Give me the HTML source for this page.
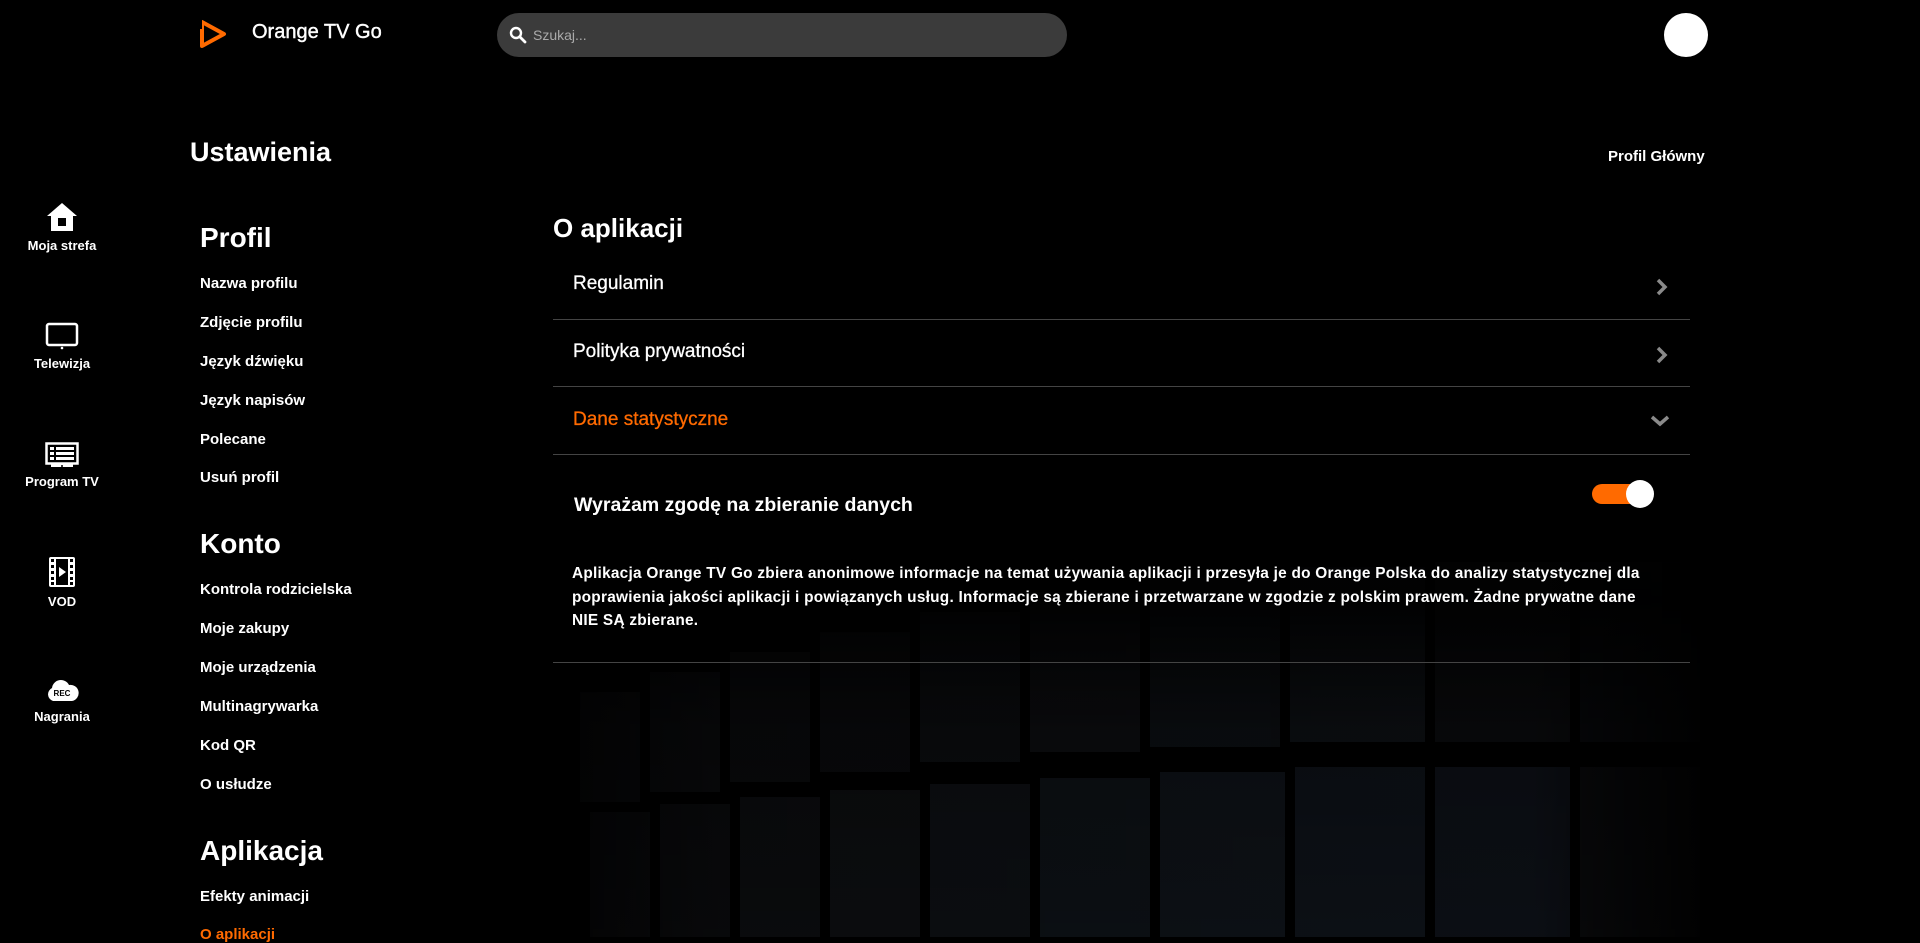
<!DOCTYPE html>
<html><head><meta charset="utf-8"><style>
*{margin:0;padding:0;box-sizing:border-box}
body{width:1920px;height:937px;background:#000;color:#fff;font-family:"Liberation Sans",Arial,sans-serif;font-weight:bold;overflow:hidden;position:relative}
.a{position:absolute;white-space:nowrap}
.nav{position:absolute;left:0;width:124px;text-align:center;font-size:13px}
.nav svg{display:block;margin:0 auto 6px}
.mi{position:absolute;left:200px;font-size:15px}
.mh{position:absolute;left:200px;font-size:28px}
.row{position:absolute;left:553px;width:1137px;border-bottom:1px solid #444}
</style></head><body>
<svg class="a" style="left:470px;top:192px" width="1250" height="745">
<defs><linearGradient id="f" x1="0" y1="0" x2="1" y2="0"><stop offset="0" stop-color="#000" stop-opacity="1"/><stop offset=".2" stop-color="#000" stop-opacity=".3"/><stop offset=".85" stop-color="#000" stop-opacity=".2"/><stop offset="1" stop-color="#000" stop-opacity="1"/></linearGradient>
<linearGradient id="g" x1="0" y1="0" x2="0" y2="1"><stop offset="0" stop-color="#000" stop-opacity=".4"/><stop offset=".55" stop-color="#000" stop-opacity=".9"/><stop offset=".72" stop-color="#000" stop-opacity=".3"/><stop offset="1" stop-color="#000" stop-opacity=".1"/></linearGradient></defs>
<g fill="#101114" opacity=".85" transform="translate(-60,0)">
<rect x="170" y="500" width="60" height="110"/><rect x="240" y="480" width="70" height="120"/><rect x="320" y="460" width="80" height="130"/><rect x="410" y="440" width="90" height="140"/><rect x="510" y="420" width="100" height="150" fill="#121419"/><rect x="620" y="400" width="110" height="160" fill="#14161b"/><rect x="740" y="385" width="130" height="170" fill="#13171d"/><rect x="880" y="375" width="135" height="175" fill="#15191f"/><rect x="1025" y="370" width="135" height="180"/><rect x="1170" y="370" width="120" height="180" fill="#0e1014"/>
<rect x="180" y="620" width="60" height="125"/><rect x="250" y="612" width="70" height="133"/><rect x="330" y="605" width="80" height="140" fill="#121418"/><rect x="420" y="598" width="90" height="147" fill="#14171b"/><rect x="520" y="592" width="100" height="153" fill="#15181e"/><rect x="630" y="586" width="110" height="159" fill="#141a22"/><rect x="750" y="580" width="125" height="165" fill="#161c24"/><rect x="885" y="575" width="130" height="170" fill="#151b24"/><rect x="1025" y="575" width="135" height="170" fill="#131821"/><rect x="1170" y="575" width="120" height="170"/>
</g>
<rect width="1250" height="745" fill="url(#g)"/>
<rect width="1250" height="745" fill="url(#f)"/>
</svg>

<svg class="a" style="left:198px;top:19px" width="30" height="32" viewBox="0 0 30 32"><path d="M4 3 V27 L26 15 Z" fill="none" stroke="#ff6a00" stroke-width="4" stroke-linejoin="round"/><rect x="0" y="0" width="4" height="10" fill="#000"/></svg>
<div class="a" style="left:252px;top:21px;font-size:20px;font-weight:normal;-webkit-text-stroke:.4px #fff">Orange TV Go</div>
<div class="a" style="left:497px;top:13px;width:570px;height:44px;border-radius:22px;background:#3b3b3b"></div>
<svg class="a" style="left:509px;top:26px" width="18" height="18" viewBox="0 0 18 18"><circle cx="7" cy="7" r="5" fill="none" stroke="#fff" stroke-width="2.4"/><path d="M11 11 L16 16" stroke="#fff" stroke-width="2.8" stroke-linecap="round"/></svg>
<div class="a" style="left:533px;top:27px;font-size:14px;color:#aaa;font-weight:normal">Szukaj...</div>
<div class="a" style="left:1664px;top:13px;width:44px;height:44px;border-radius:50%;background:#fff"></div>

<div class="a" style="left:190px;top:137px;font-size:27px">Ustawienia</div>
<div class="a" style="left:1608px;top:148px;font-size:15px">Profil Główny</div>

<div class="nav" style="top:202px"><svg width="32" height="30" viewBox="0 0 32 30"><path d="M16 1 L31 14 H27 V29 H5 V14 H1 Z" fill="#fff"/><rect x="12" y="16" width="8" height="8" fill="#000"/></svg>Moja strefa</div>
<div class="nav" style="top:322px"><svg width="34" height="28" viewBox="0 0 34 28"><rect x="2" y="2" width="30" height="21" rx="2" fill="none" stroke="#fff" stroke-width="2.5"/><circle cx="17" cy="26" r="1.3" fill="#fff"/></svg>Telewizja</div>
<div class="nav" style="top:442px"><svg width="34" height="26" viewBox="0 0 34 26"><rect x="1.5" y="1.5" width="31" height="20" fill="none" stroke="#fff" stroke-width="2.5"/><rect x="5" y="5" width="4" height="3" fill="#fff"/><rect x="5" y="10" width="4" height="3" fill="#fff"/><rect x="5" y="15" width="4" height="3" fill="#fff"/><rect x="11" y="5" width="18" height="3" fill="#fff"/><rect x="11" y="10" width="18" height="3" fill="#fff"/><rect x="11" y="15" width="18" height="3" fill="#fff"/><rect x="6" y="22" width="22" height="3" fill="#fff"/><circle cx="17" cy="24" r="1" fill="#000"/></svg>Program TV</div>
<div class="nav" style="top:556px"><svg width="28" height="32" viewBox="0 0 28 32"><rect x="1" y="1" width="26" height="30" rx="2" fill="#fff"/><g fill="#000"><rect x="3" y="3" width="3" height="3"/><rect x="3" y="9" width="3" height="3"/><rect x="3" y="15" width="3" height="3"/><rect x="3" y="21" width="3" height="3"/><rect x="3" y="26" width="3" height="3"/><rect x="22" y="3" width="3" height="3"/><rect x="22" y="9" width="3" height="3"/><rect x="22" y="15" width="3" height="3"/><rect x="22" y="21" width="3" height="3"/><rect x="22" y="26" width="3" height="3"/><rect x="8" y="3" width="12" height="26"/></g><path d="M11 11 L18 16 L11 21Z" fill="#fff"/></svg>VOD</div>
<div class="nav" style="top:677px"><svg width="34" height="26" viewBox="0 0 34 26"><path d="M8 24 A7 7 0 0 1 7 11 A9 9 0 0 1 24 8 A8 8 0 0 1 27 24 Z" fill="#fff"/><text x="17" y="19" font-size="8" font-family="Liberation Sans" text-anchor="middle" fill="#000">REC</text></svg>Nagrania</div>

<div class="mh" style="top:222px">Profil</div>
<div class="mi" style="top:275px">Nazwa profilu</div>
<div class="mi" style="top:314px">Zdjęcie profilu</div>
<div class="mi" style="top:353px">Język dźwięku</div>
<div class="mi" style="top:392px">Język napisów</div>
<div class="mi" style="top:431px">Polecane</div>
<div class="mi" style="top:469px">Usuń profil</div>
<div class="mh" style="top:528px">Konto</div>
<div class="mi" style="top:581px">Kontrola rodzicielska</div>
<div class="mi" style="top:620px">Moje zakupy</div>
<div class="mi" style="top:659px">Moje urządzenia</div>
<div class="mi" style="top:698px">Multinagrywarka</div>
<div class="mi" style="top:737px">Kod QR</div>
<div class="mi" style="top:776px">O usłudze</div>
<div class="mh" style="top:835px">Aplikacja</div>
<div class="mi" style="top:888px">Efekty animacji</div>
<div class="mi" style="top:926px;color:#ff6a00">O aplikacji</div>

<div class="a" style="left:553px;top:213px;font-size:26px">O aplikacji</div>
<div class="row" style="top:252px;height:68px"></div>
<div class="row" style="top:320px;height:67px"></div>
<div class="row" style="top:387px;height:68px"></div>
<div class="row" style="top:455px;height:208px"></div>
<div class="a" style="left:573px;top:273px;font-size:19px;font-weight:normal;-webkit-text-stroke:.3px #fff">Regulamin</div>
<div class="a" style="left:573px;top:341px;font-size:19px;font-weight:normal;-webkit-text-stroke:.3px #fff">Polityka prywatności</div>
<div class="a" style="left:573px;top:409px;font-size:19px;font-weight:normal;color:#ff6a00;-webkit-text-stroke:.3px #ff6a00">Dane statystyczne</div>
<svg class="a" style="left:1654px;top:277px" width="16" height="20"><path d="M4 3 L11 10 L4 17" fill="none" stroke="#8a8a8a" stroke-width="3.5"/></svg>
<svg class="a" style="left:1654px;top:345px" width="16" height="20"><path d="M4 3 L11 10 L4 17" fill="none" stroke="#8a8a8a" stroke-width="3.5"/></svg>
<svg class="a" style="left:1650px;top:414px" width="20" height="14"><path d="M2 3 L10 10 L18 3" fill="none" stroke="#8a8a8a" stroke-width="3.5"/></svg>
<div class="a" style="left:574px;top:494px;font-size:19.5px">Wyrażam zgodę na zbieranie danych</div>
<div class="a" style="left:1592px;top:484px;width:52px;height:20px;border-radius:10px;background:#ff6a00"></div>
<div class="a" style="left:1626px;top:480px;width:28px;height:28px;border-radius:50%;background:#fff"></div>
<div class="a" style="left:572px;top:562px;font-size:15.4px;line-height:23.5px;letter-spacing:.25px">Aplikacja Orange TV Go zbiera anonimowe informacje na temat używania aplikacji i przesyła je do Orange Polska do analizy statystycznej dla<br>poprawienia jakości aplikacji i powiązanych usług. Informacje są zbierane i przetwarzane w zgodzie z polskim prawem. Żadne prywatne dane<br>NIE SĄ zbierane.</div>
</body></html>
